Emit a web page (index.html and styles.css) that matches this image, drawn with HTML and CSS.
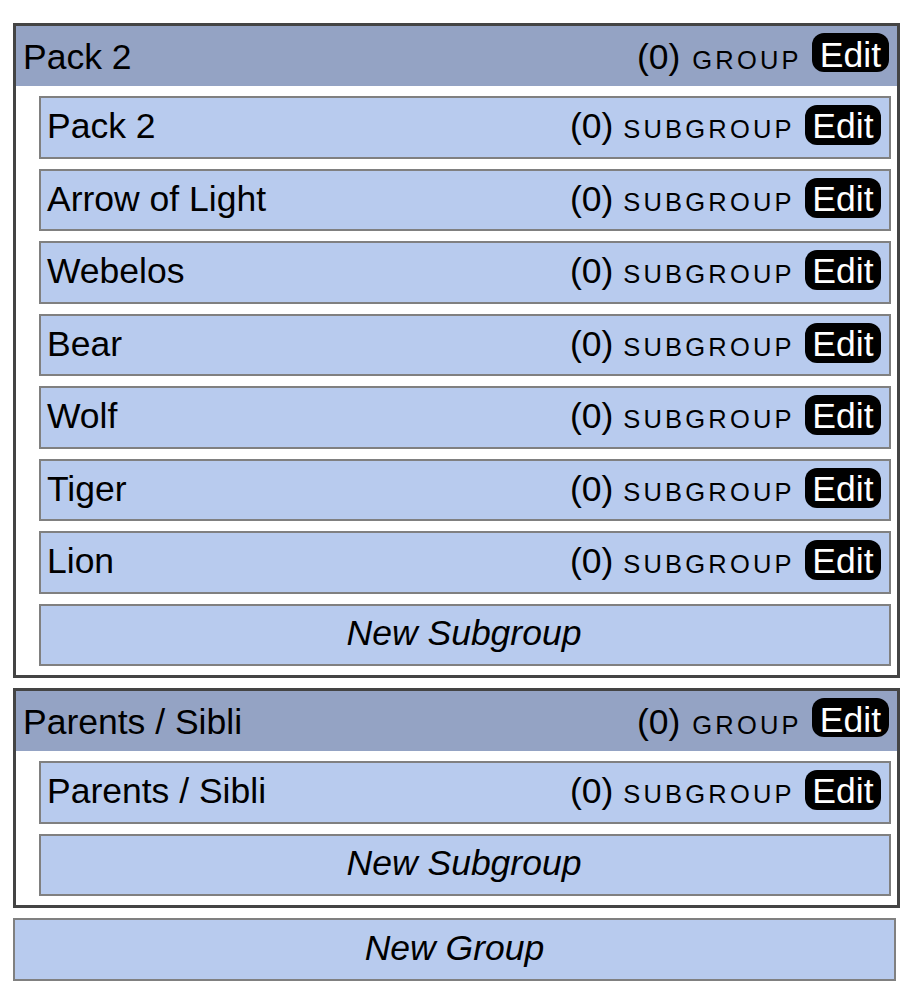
FILE: index.html
```html
<!DOCTYPE html>
<html>
<head>
<meta charset="utf-8">
<link rel="stylesheet" href="styles.css">
</head>
<body>
<div class="page">
  <div class="group">
    <div class="group-head">
      <span class="name">Pack 2</span>
      <span class="meta"><span class="count">(0)</span><span class="kind">group</span><span class="edit">Edit</span></span>
    </div>
    <div class="sub"><span class="name">Pack 2</span><span class="meta"><span class="count">(0)</span><span class="kind">subgroup</span><span class="edit">Edit</span></span></div>
    <div class="sub"><span class="name">Arrow of Light</span><span class="meta"><span class="count">(0)</span><span class="kind">subgroup</span><span class="edit">Edit</span></span></div>
    <div class="sub"><span class="name">Webelos</span><span class="meta"><span class="count">(0)</span><span class="kind">subgroup</span><span class="edit">Edit</span></span></div>
    <div class="sub"><span class="name">Bear</span><span class="meta"><span class="count">(0)</span><span class="kind">subgroup</span><span class="edit">Edit</span></span></div>
    <div class="sub"><span class="name">Wolf</span><span class="meta"><span class="count">(0)</span><span class="kind">subgroup</span><span class="edit">Edit</span></span></div>
    <div class="sub"><span class="name">Tiger</span><span class="meta"><span class="count">(0)</span><span class="kind">subgroup</span><span class="edit">Edit</span></span></div>
    <div class="sub"><span class="name">Lion</span><span class="meta"><span class="count">(0)</span><span class="kind">subgroup</span><span class="edit">Edit</span></span></div>
    <div class="sub new">New Subgroup</div>
  </div>
  <div class="group">
    <div class="group-head">
      <span class="name">Parents / Sibli</span>
      <span class="meta"><span class="count">(0)</span><span class="kind">group</span><span class="edit">Edit</span></span>
    </div>
    <div class="sub"><span class="name">Parents / Sibli</span><span class="meta"><span class="count">(0)</span><span class="kind">subgroup</span><span class="edit">Edit</span></span></div>
    <div class="sub new">New Subgroup</div>
  </div>
  <div class="new-group">New Group</div>
</div>
</body>
</html>
```
FILE: styles.css
```css
html, body {
  margin: 0;
  padding: 0;
  background: #ffffff;
}
body {
  font-family: "Liberation Sans", Arial, sans-serif;
  font-size: 35.5px;
  color: #000;
}
.page {
  display: flex;
  flex-direction: column;
  align-items: flex-start;
  gap: 10px;
  padding: 23px 0 0 13px;
}
.group {
  box-sizing: border-box;
  width: 887px;
  border: 3px solid #444444;
  padding-bottom: 9px;
  background: #fff;
}
.group-head {
  box-sizing: border-box;
  height: 60px;
  background: #94a3c4;
  display: flex;
  align-items: baseline;
  padding: 6.5px 8px 0 7px;
}
.name {
  flex: 1;
  white-space: nowrap;
}
.meta {
  white-space: nowrap;
}
.kind {
  text-transform: uppercase;
  font-size: 25.5px;
  letter-spacing: 3.2px;
  margin-left: 10px;
}
.group-head .kind {
  margin-left: 12px;
}
.edit {
  display: inline-block;
  vertical-align: baseline;
  background: #000;
  color: #fff;
  border-radius: 12px;
  padding: 3px 7.5px 0;
  height: 37px;
  line-height: 37px;
  margin-left: 10px;
}
.group-head .edit {
  padding: 4px 8px 0;
  height: 35px;
  line-height: 36px;
  vertical-align: 2px;
}
.sub {
  box-sizing: border-box;
  height: 62.5px;
  margin: 10px 6px 0 23px;
  border: 2px solid #808080;
  background: #b8cbee;
  display: flex;
  align-items: baseline;
  padding: 7px 8px 0 6px;
}
.new {
  display: block;
  text-align: center;
  font-style: italic;
}
.new-group {
  box-sizing: border-box;
  width: 883px;
  height: 63px;
  border: 2px solid #808080;
  background: #b8cbee;
  text-align: center;
  font-style: italic;
  padding-top: 7.5px;
}
```
